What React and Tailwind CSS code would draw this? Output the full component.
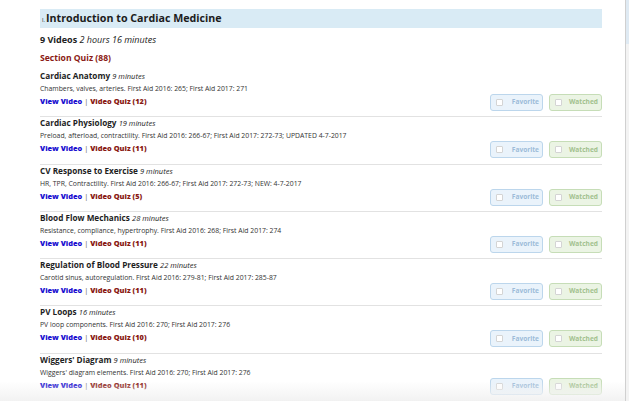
const videos = [
  { title: 'Cardiac Anatomy', mins: '9 minutes', desc: 'Chambers, valves, arteries. First Aid 2016: 265; First Aid 2017: 271', quiz: 12 },
  { title: 'Cardiac Physiology', mins: '19 minutes', desc: 'Preload, afterload, contractility. First Aid 2016: 266-67; First Aid 2017: 272-73; UPDATED 4-7-2017', quiz: 11 },
  { title: 'CV Response to Exercise', mins: '9 minutes', desc: 'HR, TPR, Contractility. First Aid 2016: 266-67; First Aid 2017: 272-73; NEW: 4-7-2017', quiz: 5 },
  { title: 'Blood Flow Mechanics', mins: '28 minutes', desc: 'Resistance, compliance, hypertrophy. First Aid 2016: 268; First Aid 2017: 274', quiz: 11 },
  { title: 'Regulation of Blood Pressure', mins: '22 minutes', desc: 'Carotid sinus, autoregulation. First Aid 2016: 279-81; First Aid 2017: 285-87', quiz: 11 },
  { title: 'PV Loops', mins: '16 minutes', desc: 'PV loop components. First Aid 2016: 270; First Aid 2017: 276', quiz: 10 },
  { title: "Wiggers' Diagram", mins: '9 minutes', desc: "Wiggers' diagram elements. First Aid 2016: 270; First Aid 2017: 276", quiz: 11 },
];

function Toggle({ label, tone }) {
  const styles =
    tone === 'blue'
      ? 'bg-[#eaf3fb] border-[#bcd6ec] text-[#9dbcd9]'
      : 'bg-[#ebf4e4] border-[#c6ddb7] text-[#a2c18e]';
  return (
    <div className={`w-[53px] h-[17px] rounded-[3px] border flex items-center pl-[5px] pr-[3px] ${styles}`}>
      <span className="w-[7px] h-[7px] bg-white border border-[#d4d4d4] rounded-[1px] shrink-0" />
      <span className="flex-1 text-right text-[6.6px] font-bold leading-none">{label}</span>
    </div>
  );
}

function VideoRow({ v }) {
  return (
    <div className="h-[47.3px] border-b border-[#e2e2e2] flex justify-between">
      <div className="flex flex-col leading-[12px]">
        <div className="text-[#1e1e1e] text-[8.2px] font-bold">
          {v.title} <span className="italic font-normal text-[7.5px]">{v.mins}</span>
        </div>
        <div className="mt-[1px] text-[#333] text-[6.85px]">{v.desc}</div>
        <div className="text-[7.4px] font-extrabold">
          <span className="text-[#1a10d0]">View Video</span>
          <span className="text-[#555] font-normal"> | </span>
          <span className="text-[#8a1a14]">Video Quiz ({v.quiz})</span>
        </div>
      </div>
      <div className="mt-[24px] flex gap-[6px] h-[17px]">
        <Toggle label="Favorite" tone="blue" />
        <Toggle label="Watched" tone="green" />
      </div>
    </div>
  );
}

export default function App() {
  return (
    <div className="w-[629px] h-[401px] overflow-hidden bg-white flex" style={{ fontFamily: '"Open Sans", sans-serif' }}>
      <div className="w-[625px] pl-[40px] pr-[23px] pt-[9px] relative">
        <div className="h-[19px] bg-[#d9ebf5] flex items-center pl-[2px] text-[#1c1c1c]">
          <span className="text-[5.5px] mr-[1px] mt-[4px]">I.</span>
          <span className="text-[10.7px] font-bold">Introduction to Cardiac Medicine</span>
        </div>
        <div className="mt-[6px] h-[12px] leading-[12px] text-[9px] text-[#222]">
          <span className="font-bold">9 Videos</span> <span className="italic">2 hours 16 minutes</span>
        </div>
        <div className="mt-[6px] h-[12px] leading-[12px] text-[8.6px] font-bold text-[#8a1a14]">Section Quiz (88)</div>
        <div className="mt-[6px]">
          {videos.map((v) => (
            <VideoRow key={v.title} v={v} />
          ))}
        </div>
        <div className="absolute left-0 right-0 bottom-0 h-[20px] bg-gradient-to-t from-[#f2f2f2] to-transparent pointer-events-none" />
      </div>
      <div className="w-[4px] border-l border-[#d0d0d0] bg-[#f3f3f3] flex flex-col">
        <div className="h-[44px] bg-[#dfeaf3]" />
      </div>
    </div>
  );
}
